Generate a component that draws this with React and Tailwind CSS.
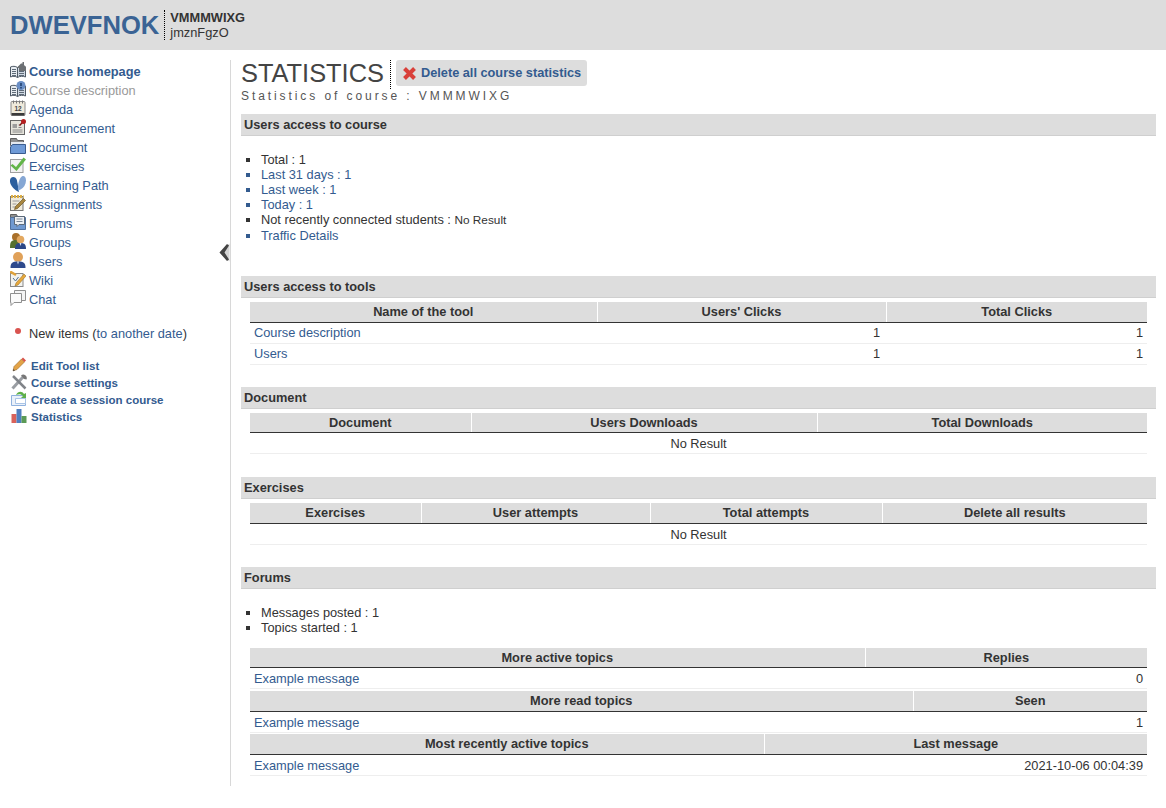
import React from 'react'

const BLUE = 'text-[#335b8f]'

// small hand drawn tool icons, roughly the old claroline set
function Book({ children }){
  return (
    <svg width="16" height="16" viewBox="0 0 16 16" className="block">
      <path d="M.5 5c2-1 5-1 7 .5v10c-2-1.500-5-1.500-7-.5z" fill="#e6ebf0" stroke="#4f5a66" />
      <path d="M15.500 5c-2-1-6-1-8 .5v10c2-1.500 6-1.500 8-.5z" fill="#cfd8e2" stroke="#4f5a66" />
      <path d="M2 7.500h4M2 9.500h4M2 11.500h4M2 13.500h4M9 9.500h5M9 11.500h5M9 13.500h5" stroke="#5f6b78" />
      {children}
    </svg>
  )
}

const icons = {
  home: <Book><path d="M6.500 6L11 1.500h1.500V0H14v3l2 2v4H9V6z" fill="#6c7074" /></Book>,
  desc: <Book><circle cx="11" cy="4.500" r="4.500" fill="#6a8fc6" /><path d="M11 2v3M11 6v1.500" stroke="#12305e" strokeWidth="1.300" /></Book>,
  agenda: (
    <svg width="16" height="16" viewBox="0 0 16 16" className="block">
      <rect x="1" y="1.500" width="14" height="14" rx="1" fill="#efeadb" stroke="#8a8a8a" />
      <path d="M1.500 13h13v2.500h-13z" fill="#3a3a3a" />
      <path d="M3.500 .5v3M6.500 .5v3M9.500 .5v3M12.500 .5v3" stroke="#777" />
      <text x="8" y="10.500" textAnchor="middle" fontSize="6.500" fontWeight="700" fill="#444" fontFamily="Liberation Sans">12</text>
    </svg>
  ),
  announce: (
    <svg width="16" height="16" viewBox="0 0 16 16" className="block">
      <rect x=".5" y="1.500" width="14" height="14" fill="#e6e4dc" stroke="#666" />
      <path d="M2.500 5h4.500v4H2.500z" fill="#9c9c9c" />
      <path d="M2.500 11h10M2.500 13h10M8.500 6h2M8.500 8.500h3" stroke="#888" />
      <path d="M9.500 6.500l3-3" stroke="#7a1212" strokeWidth="1.500" />
      <circle cx="13.500" cy="2.500" r="2.500" fill="#b51f1f" />
    </svg>
  ),
  folder: (
    <svg width="16" height="16" viewBox="0 0 16 16" className="block">
      <path d="M.5.5h6l1 2h6v5H.5z" fill="#8f8f8f" stroke="#5f5f5f" />
      <path d="M1 4h13v3H1z" fill="#e4e9f0" />
      <path d="M.5 15.500V9l2-2.500h13V15.500z" fill="#6f9ad6" stroke="#3a5c8f" />
    </svg>
  ),
  check: (
    <svg width="16" height="16" viewBox="0 0 16 16" className="block">
      <rect x=".5" y="2.500" width="12.500" height="13" fill="#f2f2f2" stroke="#a0a0a0" />
      <path d="M2.500 7l3.500 3L13.500.5 16 2.500 6.500 14 .5 8.500z" fill="#63b548" />
    </svg>
  ),
  path: (
    <svg width="16" height="16" viewBox="0 0 16 16" className="block">
      <path d="M0 4c.5-4 6-4 7 .5L9 16C4 14-.5 9 0 4z" fill="#2c5f9e" />
      <path d="M8 14.500c-.5-5 1-13 4.500-14.500 3.500-.5 4 4 3 7.500-1 3.500-4 6-7.500 7z" fill="#86a7d4" />
    </svg>
  ),
  assign: (
    <svg width="16" height="16" viewBox="0 0 16 16" className="block">
      <rect x=".5" y="1.500" width="12.500" height="14" fill="#efeadb" stroke="#777" />
      <path d="M1 1.500h12.500" stroke="#dcae45" strokeWidth="3" strokeDasharray="2 1" />
      <path d="M2.500 6h7M2.500 9h4M2.500 12h3" stroke="#999" />
      <path d="M5.500 11.500L13.500 3.500 15.500 5.500 7.500 13.500 4.500 14.500z" fill="#a9863e" stroke="#5f4713" strokeWidth=".6" />
    </svg>
  ),
  forum: (
    <svg width="16" height="16" viewBox="0 0 16 16" className="block">
      <path d="M.5.5h6l1 2h7v5H.5z" fill="#8f8f8f" stroke="#5f5f5f" />
      <path d="M.5 3.500h15v12H.5z" fill="#7099d0" stroke="#50719f" />
      <path d="M4.500 2.500h10v8H9l-2 2v-2H4.500z" fill="#eef1f5" stroke="#5d6a7a" />
      <path d="M6.500 5h6M6.500 7.500h6" stroke="#7a8796" />
    </svg>
  ),
  groups: (
    <svg width="16" height="16" viewBox="0 0 16 16" className="block">
      <circle cx="6" cy="4" r="4" fill="#a9702a" />
      <path d="M0 15c0-6 1-8 6-8s5 3 5 8z" fill="#55702f" />
      <circle cx="10.500" cy="6.500" r="3.800" fill="#e3a860" />
      <path d="M5 16c0-4 1-6 5.500-6S16 12 16 16z" fill="#2c4785" />
      <path d="M9.500 10h2l-1 3z" fill="#dfe6f0" />
    </svg>
  ),
  users: (
    <svg width="16" height="16" viewBox="0 0 16 16" className="block">
      <circle cx="8" cy="5" r="5" fill="#e0a159" />
      <path d="M.5 16c0-5 1.500-6.500 7.500-6.500s7.500 1.500 7.500 6.500z" fill="#2f4a8c" />
      <path d="M7 9.500h2l-1 3z" fill="#dfe6f0" />
    </svg>
  ),
  wiki: (
    <svg width="16" height="16" viewBox="0 0 16 16" className="block">
      <rect x=".5" y="2.500" width="12.500" height="13" fill="#f2f2ee" stroke="#8a8a8a" />
      <path d="M0 .5l6 3.500" stroke="#e0a23a" strokeWidth="2.500" />
      <path d="M3 7l2.500 3 3-4" stroke="#4f6f95" fill="none" />
      <path d="M6 12l8-9 2 2-8 9-3 1z" fill="#e8a83a" stroke="#8a6420" strokeWidth=".5" />
    </svg>
  ),
  chat: (
    <svg width="16" height="16" viewBox="0 0 16 16" className="block">
      <path d="M4.500.5h11v10h-11z" fill="#f4f4f4" stroke="#8f8f8f" />
      <path d="M.5 3.500h11v9H4l-3 3v-3H.5z" fill="#fafafa" stroke="#8f8f8f" />
    </svg>
  ),
  pencil: (
    <svg width="16" height="16" viewBox="0 0 16 16" className="block">
      <path d="M3 9.500L10.500 2l3 3-7.500 7.500-4 1.500z" fill="#e3a347" stroke="#8a5c1e" strokeWidth=".5" />
      <path d="M10.500 2l1.500-1.500 3 3L13.500 5z" fill="#d9534a" />
      <path d="M2.500 12l-.5 2 2-.5z" fill="#444" />
    </svg>
  ),
  tools: (
    <svg width="16" height="16" viewBox="0 0 16 16" className="block">
      <path d="M1.500 14.500L12 3" stroke="#9a9ea3" strokeWidth="3" />
      <path d="M2 2l12.500 12.500" stroke="#808489" strokeWidth="2.500" />
      <path d="M10 1.500a3.500 3.500 0 0 1 5.500 4l-2.500-.5z" fill="#777" />
    </svg>
  ),
  session: (
    <svg width="17" height="16" viewBox="0 0 17 16" className="block">
      <path d="M.5 4.500h14v10H.5z" fill="#eaf1fa" stroke="#8fb1de" />
      <path d="M4.500 7.500h10v5h-10z" fill="#fff" stroke="#a9c4e6" />
      <path d="M5 4c2-4 6-4 8-1l2-1v5h-5l2-2c-2-2-4-2-7-1z" fill="#5fb04a" />
    </svg>
  ),
  stats: (
    <svg width="16" height="16" viewBox="0 0 16 16" className="block">
      <path d="M.5 6h5v9h-5z" fill="#d9625a" />
      <path d="M5.500 1h5v14h-5z" fill="#4f7fc0" />
      <path d="M10.500 8h5v7h-5z" fill="#5b9a56" />
    </svg>
  ),
}

const tools = [
  { icon: 'home', label: 'Course homepage', cls: `font-bold ${BLUE}` },
  { icon: 'desc', label: 'Course description', cls: 'text-[#999999]' },
  { icon: 'agenda', label: 'Agenda' },
  { icon: 'announce', label: 'Announcement' },
  { icon: 'folder', label: 'Document' },
  { icon: 'check', label: 'Exercises' },
  { icon: 'path', label: 'Learning Path' },
  { icon: 'assign', label: 'Assignments' },
  { icon: 'forum', label: 'Forums' },
  { icon: 'groups', label: 'Groups' },
  { icon: 'users', label: 'Users' },
  { icon: 'wiki', label: 'Wiki' },
  { icon: 'chat', label: 'Chat' },
]

const admin = [
  { icon: 'pencil', label: 'Edit Tool list' },
  { icon: 'tools', label: 'Course settings' },
  { icon: 'session', label: 'Create a session course' },
  { icon: 'stats', label: 'Statistics' },
]

function Sidebar(){
  return (
    <aside className="relative w-[231px] shrink-0 border-r border-[#d8d8d8] pl-[10px] pt-[2px]">
      <ul>
        {tools.map((t) => (
          <li key={t.label} className="flex h-[19px] gap-[3px]">
            <span className="w-[16px] shrink-0">{icons[t.icon]}</span>
            <a className={`text-[12.8px] leading-[19px] ${t.cls || BLUE}`}>{t.label}</a>
          </li>
        ))}
      </ul>
      <p className="mt-[15px] flex h-[19px] items-center text-[12.8px] text-[#333]">
        <span className="-mt-[6px] ml-[5px] mr-[8px] h-[6px] w-[6px] rounded-full bg-[#d9534f]" />
        New items (<a className={BLUE}>to another date</a>)
      </p>
      <ul className="mt-[15px]">
        {admin.map((t) => (
          <li key={t.label} className="flex h-[17px] items-center gap-[3px]">
            <span className="-mt-[3px] flex w-[18px] shrink-0 justify-center">{icons[t.icon]}</span>
            <a className={`text-[11.52px] font-bold ${BLUE}`}>{t.label}</a>
          </li>
        ))}
      </ul>
      {/* collapse handle */}
      <svg className="absolute right-0 top-[183px]" width="11" height="19" viewBox="0 0 11 19">
        <path d="M10.500 .5v18L.5 9.500z" fill="#d4d4d4" />
        <path d="M8 1l2 1.500L5.500 9.500l4.500 7L8 18 .5 9.500z" fill="#444" />
      </svg>
    </aside>
  )
}

function SectionBar({ children }){
  return (
    <h2 className="h-[22px] border-b border-[#cfcfcf] bg-[#dddddd] pl-[3px] text-[12.8px] font-bold leading-[21px] text-[#333]">{children}</h2>
  )
}

function Table({ cols, rows }){
  return (
    <table className="ml-[9px] w-[897px] table-fixed border-collapse text-[12.8px]">
      <thead>
        <tr>
          {cols.map((c) => (
            <th key={c.label} className={`h-[20px] border-b border-l border-b-[#333] border-l-white bg-[#dddddd] p-0 text-center font-bold text-[#333] first:border-l-0 ${c.w}`}>{c.label}</th>
          ))}
        </tr>
      </thead>
      <tbody>
        {rows}
      </tbody>
    </table>
  )
}

function Row({ cells, pad = 'pt-0' }){
  return (
    <tr className="h-[21px] border-b border-[#eeeeee]">
      {cells.map((c, i) => {
        const last = i === cells.length - 1
        const align = i === 0 ? `text-left ${BLUE}` : 'text-right text-[#333]'
        return <td key={i} className={`pb-0 pl-[4px] leading-[15px] ${pad} ${last ? 'pr-[4px]' : 'pr-[6px]'} ${align}`}>{c}</td>
      })}
    </tr>
  )
}

function EmptyRow({ span }){
  return (
    <tr className="h-[21px] border-b border-[#eeeeee]">
      <td colSpan={span} className="px-0 pb-0 pt-[1px] text-center leading-[15px] text-[#333]">No Result</td>
    </tr>
  )
}

function Bullets({ children, className = '' }){
  return <ul className={`ml-[20px] list-[square] pl-0 text-[12.8px] leading-[15px] text-[#333] ${className}`}>{children}</ul>
}

function Statistics(){
  return (
    <main className="min-w-0 flex-1 pb-[10px] pl-[10px] pr-[10px]">
      <div className="flex items-start">
        <h1 className="h-[29px] border-r border-dotted border-black pr-[6px] text-[25.4px] leading-[27px] text-[#444]">STATISTICS</h1>
        <a className={`ml-[5px] flex h-[26px] items-center gap-[4px] rounded-[3px] bg-[#dddddd] pl-[6px] pr-[6px] text-[12.75px] font-bold ${BLUE}`}>
          <svg width="15" height="15" viewBox="0 0 15 15">
            <path d="M2.500 2.500l10 10M12.500 2.500l-10 10" stroke="#d9403a" strokeWidth="4" />
          </svg>
          Delete all course statistics
        </a>
      </div>
      <p className="mt-[1px] text-[12px] leading-[13px] tracking-[2.92px] text-[#555]">Statistics of course : VMMMWIXG</p>

      <div className="mt-[11px]">
        <SectionBar>Users access to course</SectionBar>
        <Bullets className="mt-[16px]">
          <li>Total : 1</li>
          <li className={BLUE}>Last 31 days : 1</li>
          <li className={BLUE}>Last week : 1</li>
          <li className={BLUE}>Today : 1</li>
          <li>Not recently connected students : <span className="text-[11.8px]">No Result</span></li>
          <li className={BLUE}>Traffic Details</li>
        </Bullets>
      </div>

      <div className="mt-[33px]">
        <SectionBar>Users access to tools</SectionBar>
        <div className="mt-[4px]">
          <Table
            cols={[
              { label: 'Name of the tool', w: 'w-[347px]' },
              { label: "Users' Clicks", w: 'w-[289px]' },
              { label: 'Total Clicks', w: 'w-[261px]' },
            ]}
            rows={<>
              <Row cells={['Course description', '1', '1']} />
              <Row cells={['Users', '1', '1']} />
            </>}
          />
        </div>
      </div>

      <div className="mt-[22px]">
        <SectionBar>Document</SectionBar>
        <div className="mt-[4px]">
          <Table
            cols={[
              { label: 'Document', w: 'w-[221px]' },
              { label: 'Users Downloads', w: 'w-[346px]' },
              { label: 'Total Downloads', w: 'w-[330px]' },
            ]}
            rows={<EmptyRow span={3} />}
          />
        </div>
      </div>

      <div className="mt-[23px]">
        <SectionBar>Exercises</SectionBar>
        <div className="mt-[4px]">
          <Table
            cols={[
              { label: 'Exercises', w: 'w-[171px]' },
              { label: 'User attempts', w: 'w-[229px]' },
              { label: 'Total attempts', w: 'w-[232px]' },
              { label: 'Delete all results', w: 'w-[265px]' },
            ]}
            rows={<EmptyRow span={4} />}
          />
        </div>
      </div>

      <div className="mt-[22px]">
        <SectionBar>Forums</SectionBar>
        <Bullets className="mt-[16px]">
          <li>Messages posted : 1</li>
          <li>Topics started : 1</li>
        </Bullets>
        <div className="mt-[13px]">
          <Table
            cols={[
              { label: 'More active topics', w: 'w-[615px]' },
              { label: 'Replies', w: 'w-[282px]' },
            ]}
            rows={<Row pad="pt-[1px]" cells={['Example message', '0']} />}
          />
          <div className="mt-[2px]">
            <Table
              cols={[
                { label: 'More read topics', w: 'w-[663px]' },
                { label: 'Seen', w: 'w-[234px]' },
              ]}
              rows={<Row pad="pt-[1px]" cells={['Example message', '1']} />}
            />
          </div>
          <div className="mt-[1.5px]">
            <Table
              cols={[
                { label: 'Most recently active topics', w: 'w-[514px]' },
                { label: 'Last message', w: 'w-[383px]' },
              ]}
              rows={<Row pad="pt-[1px]" cells={['Example message', '2021-10-06 00:04:39']} />}
            />
          </div>
        </div>
      </div>
    </main>
  )
}

export default function App(){
  return (
    <div className="min-h-[808px] bg-white font-['Liberation_Sans',Arial,sans-serif]">
      <header className="flex h-[50px] items-center bg-[#dddddd] pl-[10px]">
        <div className="text-[25.6px] font-bold leading-[30px] text-[#3a6394]">DWEVFNOK</div>
        <div className="ml-[5px] h-[30px] border-l border-dotted border-black pl-[5px] text-[12.8px] leading-[15px] text-[#333]">
          <div className="font-bold">VMMMWIXG</div>
          <div>jmznFgzO</div>
        </div>
      </header>
      <div className="flex pt-[10px]">
        <Sidebar />
        <Statistics />
      </div>
    </div>
  )
}
